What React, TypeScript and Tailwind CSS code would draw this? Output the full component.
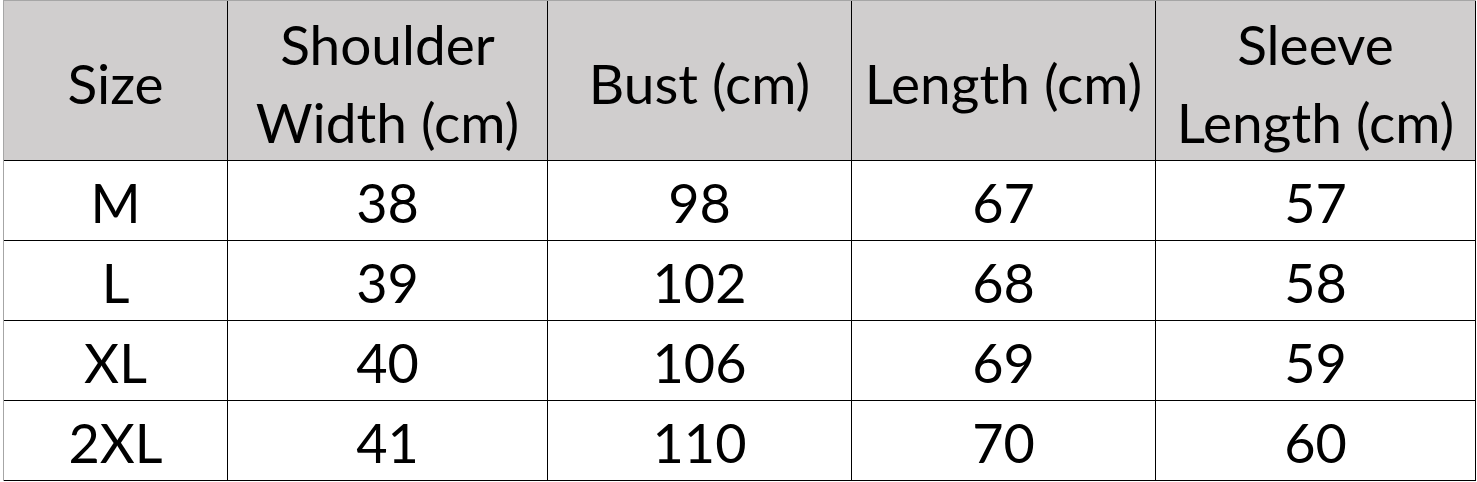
const headers = [
  ["Size"],
  ["Shoulder", "Width (cm)"],
  ["Bust (cm)"],
  ["Length (cm)"],
  ["Sleeve", "Length (cm)"],
];

const rows = [
  ["M", "38", "98", "67", "57"],
  ["L", "39", "102", "68", "58"],
  ["XL", "40", "106", "69", "59"],
  ["2XL", "41", "110", "70", "60"],
];

const widths = ["w-[224px]", "w-[320px]", "w-[304px]", "w-[304px]", "w-[320px]"];

export default function App() {
  return (
    <div className="w-[1477px] h-[482px] bg-white pl-[3px] font-['Lato',sans-serif] text-black">
      <div className="w-[1473px] border-l border-t border-l-[#a6a6a6] border-t-[#a6a6a6]">
        {/* Header */}
        <div className="flex h-[160px] bg-[#d0cece] border-b border-black">
          {headers.map((lines, i) => (
            <div
              key={i}
              className={`${widths[i]} shrink-0 flex flex-col items-center justify-center border-r border-black text-[55px] leading-[78px] pt-[4px]`}
            >
              {lines.map((l) => (
                <span key={l}>{l}</span>
              ))}
            </div>
          ))}
        </div>
        {/* Body */}
        {rows.map((row, r) => (
          <div key={r} className="flex h-[80px] border-b border-black">
            {row.map((v, i) => (
              <div
                key={i}
                className={`${widths[i]} shrink-0 flex items-center justify-center border-r border-black text-[54px] leading-none pt-[4px]`}
              >
                {v}
              </div>
            ))}
          </div>
        ))}
      </div>
    </div>
  );
}
